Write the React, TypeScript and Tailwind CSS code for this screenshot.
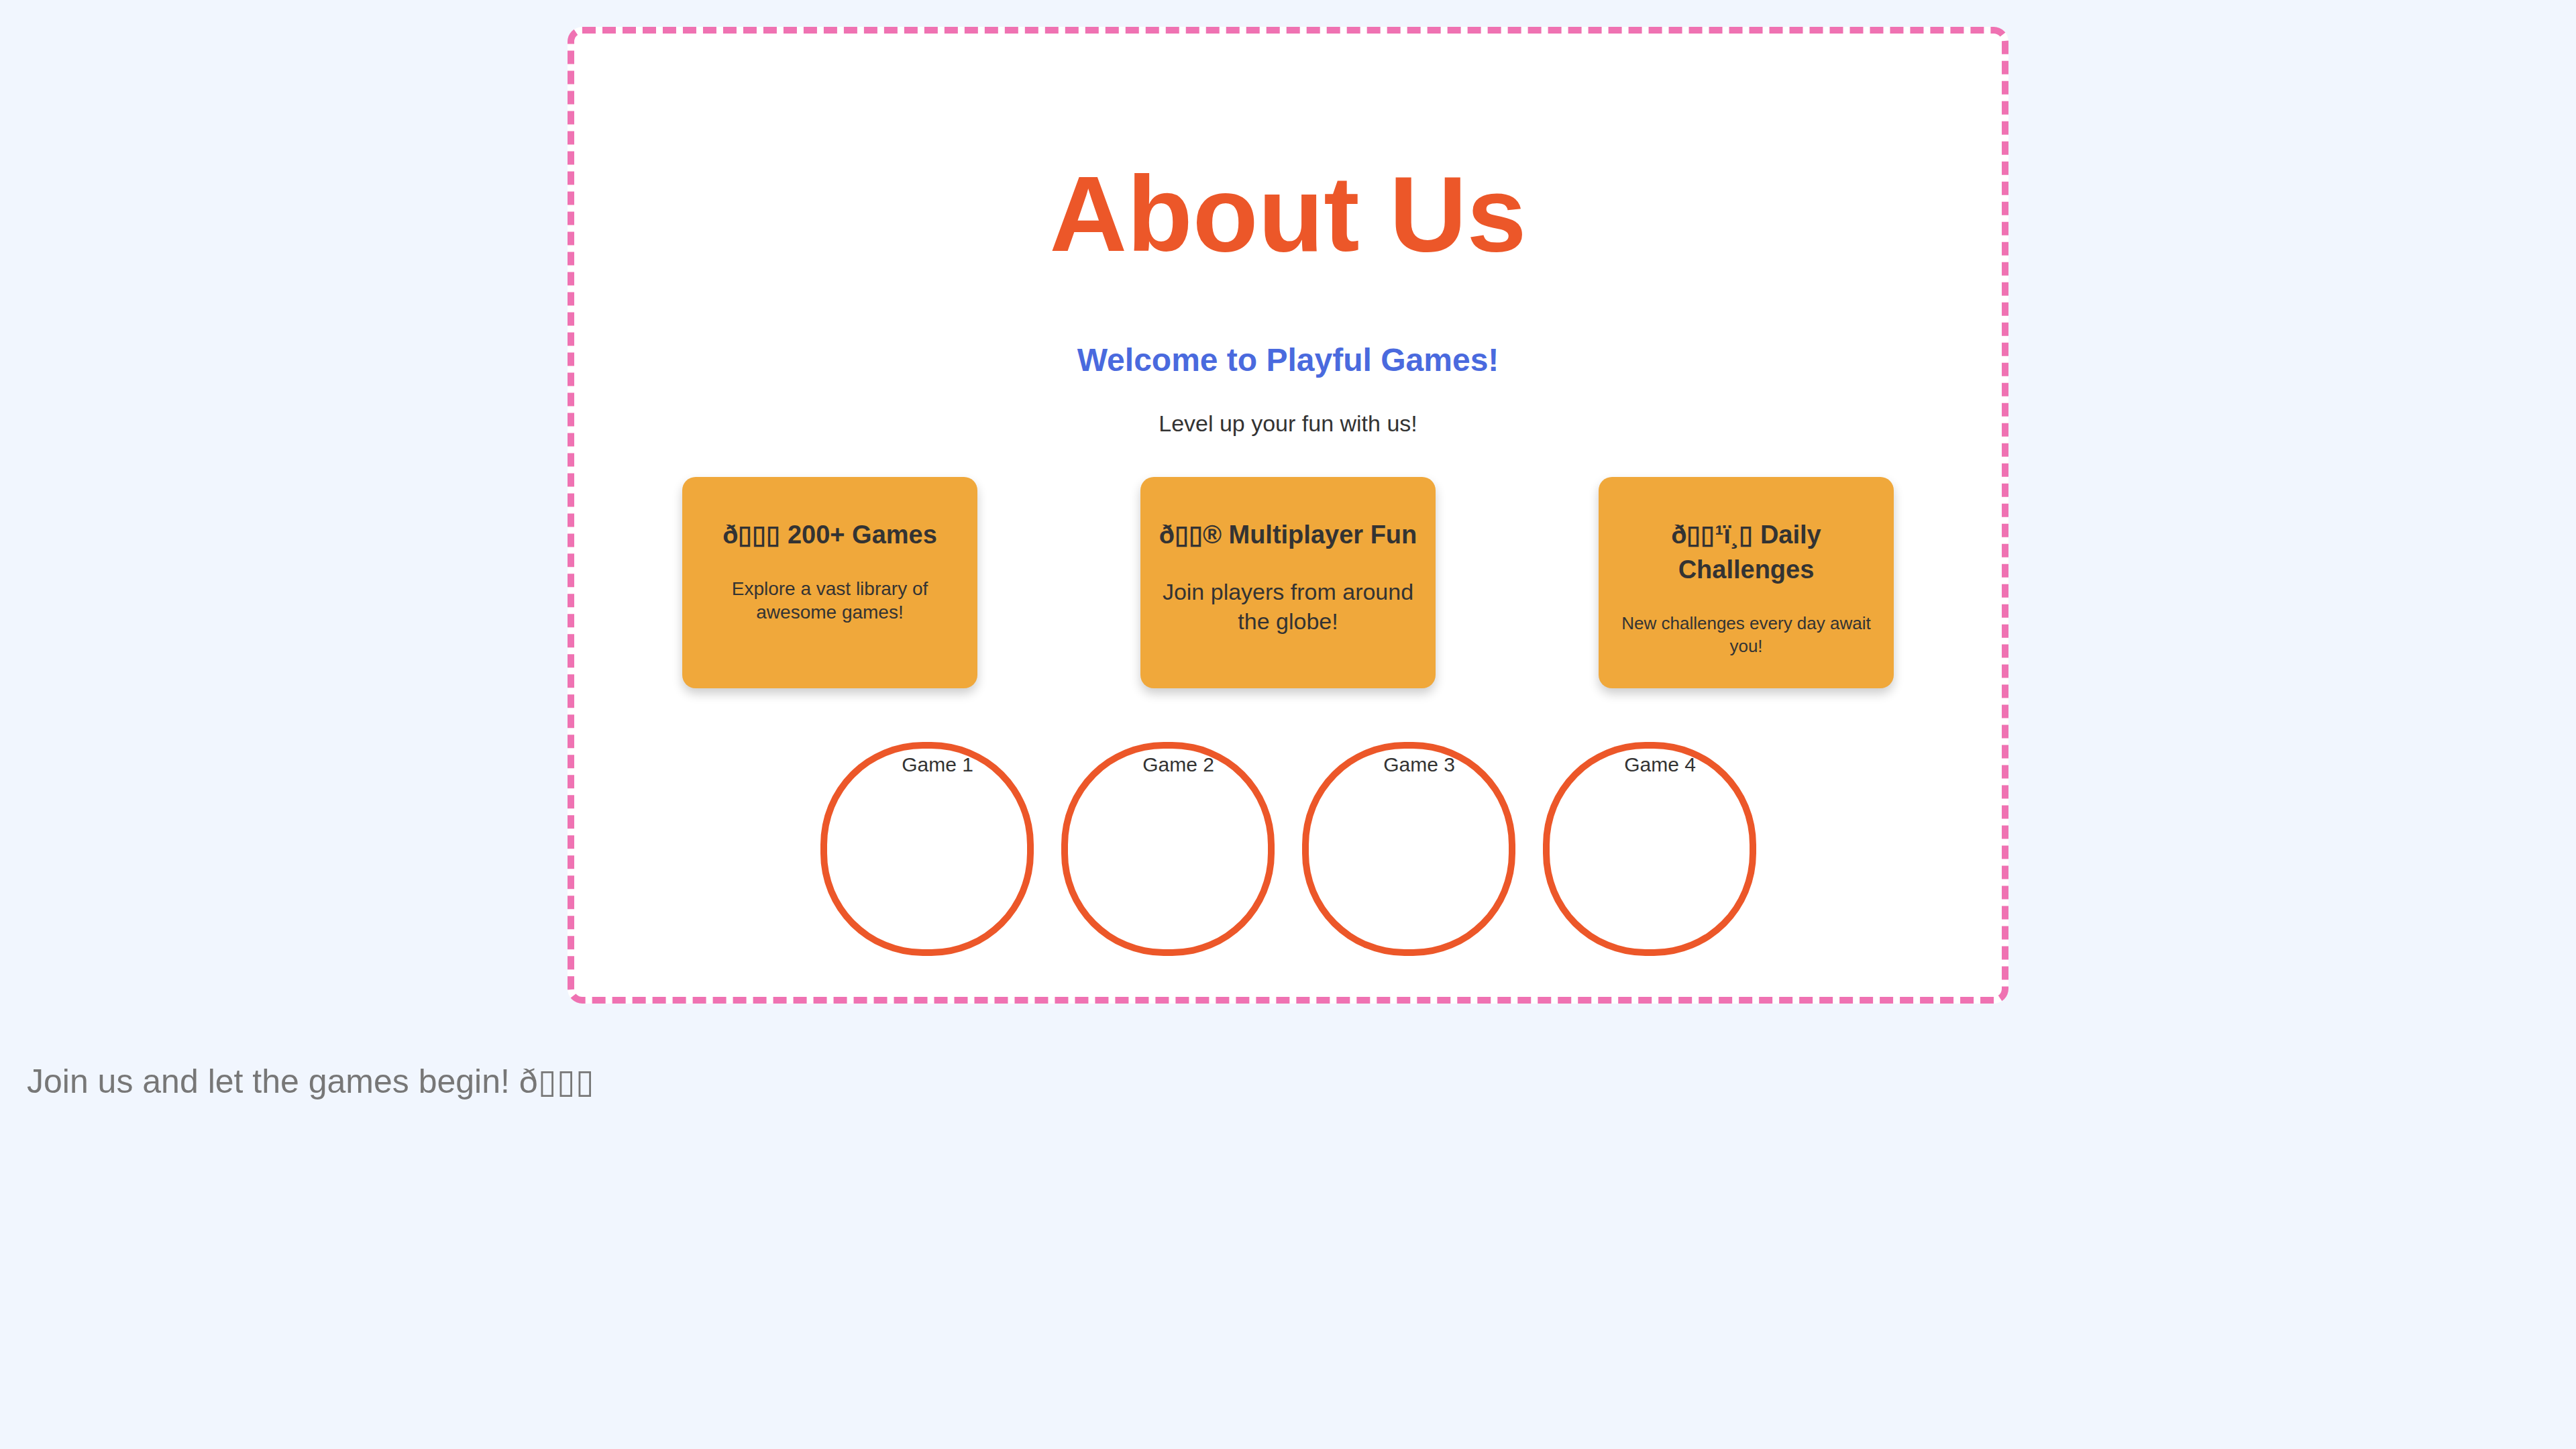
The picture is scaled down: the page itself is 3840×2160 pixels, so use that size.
const features = [
  {
    title: "ð▯▯▯ 200+ Games",
    text: "Explore a vast library of awesome games!",
    textClass: "text-[28px] leading-[35px]",
  },
  {
    title: "ð▯▯® Multiplayer Fun",
    text: "Join players from around the globe!",
    textClass: "text-[34px] leading-[44px]",
  },
  {
    title: "ð▯▯¹ï¸▯ Daily Challenges",
    text: "New challenges every day await you!",
    textClass: "text-[26px] leading-[34px]",
  },
];

const games = ["Game 1", "Game 2", "Game 3", "Game 4"];

const App = () => {
  return (
    <div className="min-h-screen bg-[#f1f6fe] p-[40px] font-['Liberation_Sans',Arial,sans-serif]">
      {/* About card */}
      <section className="mx-auto w-[2148px] rounded-[22px] border-[10px] border-dashed border-[#ef72b2] bg-white px-[64px] pt-[60px] pb-[61px] text-center">
        <h1 className="mt-[117px] text-[160px] font-bold leading-[184px] text-[#ec5729]">
          About Us
        </h1>

        <h2 className="mt-[98px] text-[48px] font-bold leading-[55px] text-[#4a6ade]">
          Welcome to Playful Games!
        </h2>
        <p className="mt-[48px] text-[34px] leading-[39px] text-[#333]">Level up your fun with us!</p>

        {/* Features */}
        <div className="mt-[60px] flex justify-center gap-[243px]">
          {features.map((f) => (
            <div
              key={f.text}
              className="h-[315px] w-[440px] rounded-[20px] bg-[#f0a83b] px-[20px] pt-[60px] text-[#333] shadow-[0_8px_16px_rgba(0,0,0,0.2)]"
            >
              <h3 className="mb-[37px] text-[38px] font-bold leading-[52px]">{f.title}</h3>
              <p className={`mx-auto max-w-[380px] ${f.textClass}`}>{f.text}</p>
            </div>
          ))}
        </div>

        {/* Game bubbles */}
        <div className="mt-[80px] flex justify-center gap-[41px]">
          {games.map((g) => (
            <div
              key={g}
              className="h-[319px] w-[318px] rounded-[48%] border-[10px] border-[#ec5729]"
            >
              <div className="pl-[32px] pt-[7px] text-[30px] leading-[34px] text-[#333]">{g}</div>
            </div>
          ))}
        </div>
      </section>

      <p className="mt-[88px] text-[50px] leading-[57px] text-[#777]">
        Join us and let the games begin! ð▯▯▯
      </p>
    </div>
  );
};

export default App;
